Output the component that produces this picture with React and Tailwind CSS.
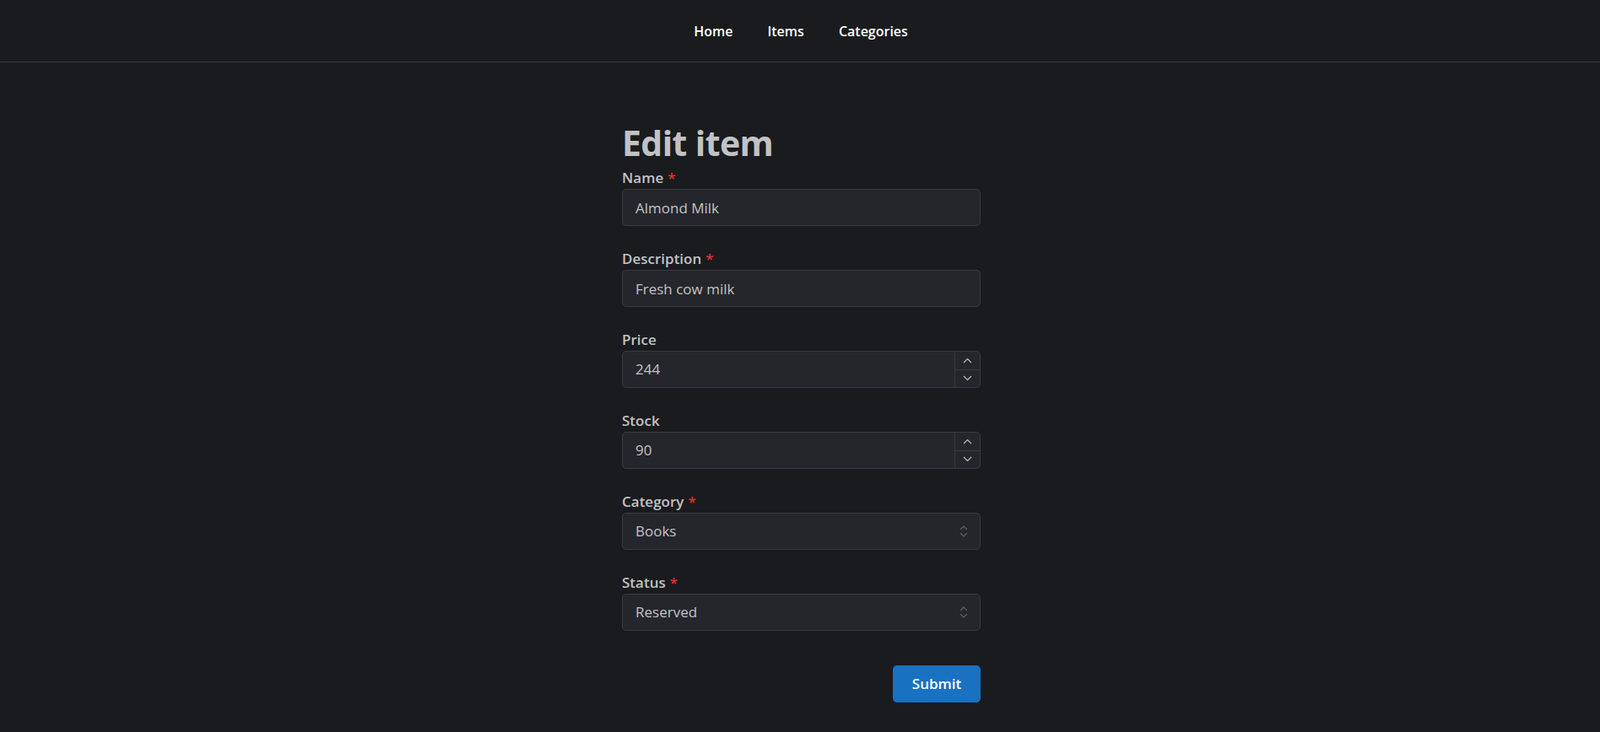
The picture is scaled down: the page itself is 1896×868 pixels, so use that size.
import { useState } from "react";

const font = { fontFamily: '"Open Sans", "Noto Sans", sans-serif' };

function Label({ text, required }) {
  return (
    <label className="block h-[27px] text-[17px] leading-[27px] font-semibold text-[#c1c2c5]">
      {text}
      {required && <span className="ml-[5px] text-[#e03131]">*</span>}
    </label>
  );
}

function Chevron({ up }) {
  return (
    <svg width="11" height="7" viewBox="0 0 11 7" fill="none" stroke="#c1c2c5" strokeWidth="1.1">
      {up ? <polyline points="1,6 5.5,1.5 10,6" /> : <polyline points="1,1 5.5,5.5 10,1" />}
    </svg>
  );
}

function SelectorIcon() {
  return (
    <svg width="12" height="18" viewBox="0 0 12 18" fill="none" stroke="#5c5f66" strokeWidth="1.2" strokeLinecap="round" strokeLinejoin="round">
      <polyline points="2.5,6.5 6,3 9.5,6.5" />
      <polyline points="2.5,11.5 6,15 9.5,11.5" />
    </svg>
  );
}

function TextField({ label, required, value }) {
  const [v, setV] = useState(value);
  return (
    <div>
      <Label text={label} required={required} />
      <input
        value={v}
        onChange={(e) => setV(e.target.value)}
        className="block w-full h-[44px] px-[15px] rounded-[5px] border border-[#373a40] bg-[#25262b] text-[17px] text-[#c1c2c5] outline-none"
        style={font}
      />
    </div>
  );
}

function NumberField({ label, value }) {
  const [v, setV] = useState(value);
  return (
    <div>
      <Label text={label} />
      <div className="flex h-[44px] rounded-[5px] border border-[#373a40] bg-[#25262b] overflow-hidden">
        <input
          value={v}
          onChange={(e) => setV(e.target.value)}
          className="flex-1 min-w-0 px-[15px] bg-transparent text-[17px] text-[#c1c2c5] outline-none"
          style={font}
        />
        <div className="flex flex-col w-[30px] border-l border-[#373a40]">
          <button onClick={() => setV(String(Number(v) + 1))} className="flex-1 flex items-center justify-center border-b border-[#373a40]">
            <Chevron up />
          </button>
          <button onClick={() => setV(String(Number(v) - 1))} className="flex-1 flex items-center justify-center">
            <Chevron />
          </button>
        </div>
      </div>
    </div>
  );
}

function SelectField({ label, value }) {
  return (
    <div>
      <Label text={label} required />
      <div className="flex items-center justify-between h-[44px] pl-[15px] pr-[13px] rounded-[5px] border border-[#373a40] bg-[#25262b] text-[17px] text-[#c1c2c5]">
        <span>{value}</span>
        <SelectorIcon />
      </div>
    </div>
  );
}

export default function App() {
  return (
    <div className="min-h-screen bg-[#1a1b1e]" style={font}>
      <nav className="h-[74px] border-b border-[#373a40] flex items-center justify-center gap-[41px] pl-[2px] text-[16px] font-semibold text-white">
        <a>Home</a>
        <a>Items</a>
        <a>Categories</a>
      </nav>
      <div className="flex justify-center pl-[3px]">
        <main className="w-[425px] pt-[67px]">
          <h1 className="text-[41px] leading-[56px] font-bold tracking-[-0.6px] text-[#c1c2c5]">Edit item</h1>
          <div className="flex flex-col gap-[25px]">
            <TextField label="Name" required value="Almond Milk" />
            <TextField label="Description" required value="Fresh cow milk" />
            <NumberField label="Price" value="244" />
            <NumberField label="Stock" value="90" />
            <SelectField label="Category" value="Books" />
            <SelectField label="Status" value="Reserved" />
          </div>
          <div className="flex justify-end mt-[41px]">
            <button className="w-[104px] h-[44px] rounded-[5px] bg-[#1971c2] text-white text-[17px] font-semibold">Submit</button>
          </div>
        </main>
      </div>
    </div>
  );
}
